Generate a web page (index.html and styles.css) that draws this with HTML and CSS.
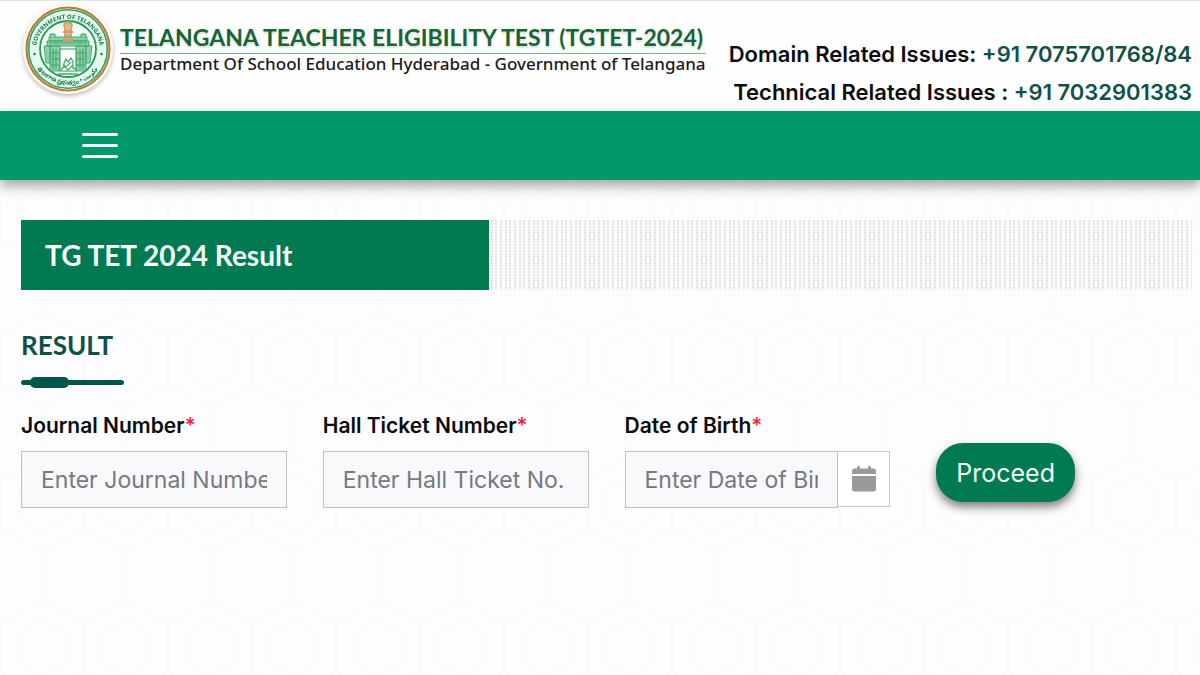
FILE: index.html
```html
<!DOCTYPE html>
<html lang="en">
<head>
<meta charset="utf-8">
<title>TG TET 2024 Result</title>
<meta name="viewport" content="width=device-width, initial-scale=1">
<link rel="stylesheet" href="styles.css">
</head>
<body>
<header class="masthead">
  <div class="brand">
    <svg class="seal" viewBox="0 0 92 92" role="img" aria-label="Government of Telangana seal">
      <defs>
        <path id="ring-top" d="M14 54 A32.5 32.5 0 1 1 78 54"/>
        <path id="ring-bottom" d="M9 50 A37.500 37.500 0 0 0 83 50"/>
      </defs>
      <circle cx="46" cy="46" r="45" fill="#fffdf8"/>
      <circle cx="46" cy="46" r="41.500" fill="#fff" stroke="#c07a35" stroke-width="2.200"/>
      <circle cx="46" cy="46" r="39.300" fill="#e6f7ec" stroke="#25a566" stroke-width="1.600"/>
      <text class="seal-text"><textPath href="#ring-top" startOffset="50%" text-anchor="middle">GOVERNMENT OF TELANGANA</textPath></text>
      <text class="seal-text"><textPath href="#ring-bottom" startOffset="50%" text-anchor="middle">తెలంగాణ  ప్రభుత్వం • حکومت</textPath></text>
      <circle cx="46" cy="46" r="28" fill="#f2fbf5" stroke="#1f9d5c" stroke-width="1.800"/>
      <circle cx="12.500" cy="51" r="1.200" fill="#167a48"/>
      <circle cx="79.500" cy="51" r="1.200" fill="#167a48"/>
      <g fill="#8ed0a6" stroke="#2b9c60" stroke-width=".8">
        <path d="M27 34h38v4H27z"/>
        <path d="M25 38h42v5H25z"/>
        <path d="M28 43h10v25H28zM54 43h10v25H54z"/>
        <path d="M28 34v-3h5v3M59 34v-3h5v3M22 43h6v17h-4zM64 43h6l-2 17h-4z"/>
      </g>
      <path d="M38 68V46h16v22z" fill="#fff" stroke="#2b9c60"/>
      <path d="M31 46v20M34 46v20M58 46v20M61 46v20M29 50h8M29 56h8M29 62h8M55 50h8M55 56h8M55 62h8M27 40h38" stroke="#2b9c60" stroke-width=".8" fill="none"/>
      <path d="M42 65v-5l2-4 2 3 3-4 2 4v7M39 67l3-4 4 4 4-4 4 4M36 71h20M41 61l3 3 5-5" fill="none" stroke="#4baa73" stroke-width="1.300"/>
      <path d="M42 25q-2-4 1-6 3-2 6 0 3 2 1 6v3h1v2h-1v4h-8v-4h-1v-2h1zM41 36h10v3H41z" fill="#d49a62"/>
      <path d="M44 21v6M46 20v8M48 21v6M43 31h6" stroke="#fff0d8" stroke-width=".7"/>
    </svg>
    <div class="brand-text">
      <p class="brand-title">TELANGANA TEACHER ELIGIBILITY TEST (TGTET-2024)</p>
      <p class="brand-sub">Department Of School Education Hyderabad - Government of Telangana</p>
    </div>
  </div>
  <div class="contacts">
    <p>Domain Related Issues: <span class="phone">+91 7075701768/84</span></p>
    <p>Technical Related Issues : <span class="phone">+91 7032901383</span></p>
  </div>
</header>
<nav class="navbar">
  <button class="menu" type="button" aria-label="Open menu"><span></span><span></span><span></span></button>
</nav>
<main class="content">
  <div class="banner"><h1 class="banner-title">TG TET 2024 Result</h1></div>
  <h2 class="section-title">RESULT</h2>
  <svg class="rule" viewBox="0 0 103 12" aria-hidden="true"><rect y="3" width="103" height="5" rx="2.500"/><rect x="9" width="39" height="11" rx="5"/></svg>
  <form class="form">
    <div class="field">
      <label for="journal">Journal Number<span class="required">*</span></label>
      <input id="journal" type="text" placeholder="Enter Journal Number">
    </div>
    <div class="field">
      <label for="ticket">Hall Ticket Number<span class="required">*</span></label>
      <input id="ticket" type="text" placeholder="Enter Hall Ticket No.">
    </div>
    <div class="field">
      <label for="dob">Date of Birth<span class="required">*</span></label>
      <div class="date-group">
        <input id="dob" type="text" placeholder="Enter Date of Birth">
        <button class="calendar" type="button" aria-label="Choose date">
          <svg viewBox="0 0 24 26" aria-hidden="true"><path d="M0 8V5q0-2.500 2.500-2.500H5V1q0-1 1.500-1T8 1v1.500h8V1q0-1 1.500-1T19 1v1.500h2.500Q24 2.500 24 5v3zM0 10h24v13q0 2.500-2.500 2.500h-19Q0 25.500 0 23z"/></svg>
        </button>
      </div>
    </div>
    <div class="action"><button class="proceed" type="submit">Proceed</button></div>
  </form>
</main>
</body>
</html>
```

FILE: styles.css
```css
* { box-sizing: border-box; }
body {
  margin: 0;
  min-height: 100vh;
  font-family: Inter, "Liberation Sans", sans-serif;
  color: #0c0c0e;
  background: #fdfcfe url("data:image/svg+xml,%3Csvg xmlns='http://www.w3.org/2000/svg' width='84' height='144'%3E%3Cpath d='M42 0v24L0 48v48l42 24v24M42 24l42 24v48l-42 24M42 44L18 58v28l24 14 24-14V58z' fill='none' stroke='%23fbfafc' stroke-width='2'/%3E%3C/svg%3E");
}
p, h1, h2 { margin: 0; }
.masthead {
  display: flex;
  justify-content: space-between;
  min-height: 111px;
  padding: 2px 8px 0 22px;
  background: #fefefe;
  border-top: 1px solid #e4e4e4;
}
.brand { display: flex; gap: 6px; align-items: flex-start; }
.seal { width: 92px; height: 92px; flex: none; filter: drop-shadow(0 2px 2px #0004); }
.seal-text { font: 700 6px "Open Sans", sans-serif; fill: #167a48; }
.brand-text { padding-top: 18px; white-space: nowrap; }
.brand-title {
  font: 700 23px/32px Lato, sans-serif;
  color: #166534;
  border-bottom: 1px solid #6fb58c;
  text-shadow: 0 2px 2px #0002;
}
.brand-sub { font: 500 17px/20px "Noto Sans", sans-serif; color: #1b1b1f; }
.contacts {
  padding-top: 32px;
  font-size: 22px;
  font-weight: 600;
  line-height: 38px;
  text-align: right;
  white-space: nowrap;
}
.phone { color: #0f5147; }
.navbar {
  display: flex;
  align-items: center;
  height: 69px;
  padding: 0 82px;
  background: #02996a;
  box-shadow: 0 6px 12px #00000059;
}
.menu {
  display: grid;
  gap: 8px;
  width: 36px;
  padding: 0;
  border: 0;
  background: none;
}
.menu span { height: 3px; border-radius: 2px; background: #f4fffa; }
.content { padding: 40px 8px 40px 21px; }
.banner {
  height: 70px;
  background-color: #fdfcfe;
  background-image:
    repeating-linear-gradient(180deg, transparent 0 2px, #f8f7f9 2px 3px),
    repeating-linear-gradient(90deg, transparent 0 3px, #e2e1e5 3px 5px, transparent 5px 8px, #e2e1e5 8px 10px, transparent 10px 12px, #e2e1e5 12px 14px);
}
.banner-title {
  display: flex;
  align-items: center;
  width: 40%;
  min-width: max-content;
  height: 100%;
  padding: 0 24px;
  background: #027a51;
  color: #f4fffa;
  font: 700 28px/36px Lato, sans-serif;
}
.section-title {
  margin-top: 37px;
  font: 700 26px/36px Lato, sans-serif;
  color: #0d5148;
}
.rule { display: block; width: 103px; height: 12px; margin-top: 14px; fill: #05564a; }
.form {
  display: grid;
  grid-template-columns: repeat(4, minmax(0, 1fr));
  gap: 36px;
  margin-top: 22px;
}
.field label {
  display: block;
  margin-bottom: 10px;
  font-size: 21px;
  font-weight: 600;
  line-height: 30px;
  white-space: nowrap;
}
.required { color: #fb1d2d; font-weight: 500; }
.field input {
  display: block;
  width: 100%;
  min-width: 0;
  height: 57px;
  padding: 0 19px;
  border: 1px solid #bfbec4;
  border-radius: 0;
  background: #f9f9fb;
  font: 400 23px/32px Inter, sans-serif;
  color: #333;
}
.field input::placeholder { color: #747a82; opacity: 1; }
.date-group { display: flex; }
.calendar {
  display: grid;
  place-items: center;
  flex: none;
  width: 52px;
  height: 56px;
  padding: 0;
  border: 1px solid #c8c8cc;
  border-left: 0;
  background: #fff;
}
.calendar svg { width: 24px; height: 26px; fill: #999; }
.action { padding: 32px 0 0 10px; }
.proceed {
  height: 59px;
  padding: 0 20px;
  border: 0;
  border-radius: 27px;
  background: #027a51;
  color: #effff8;
  font: 400 25px/32px Inter, sans-serif;
  box-shadow: 0 5px 10px #00000080;
}
```
